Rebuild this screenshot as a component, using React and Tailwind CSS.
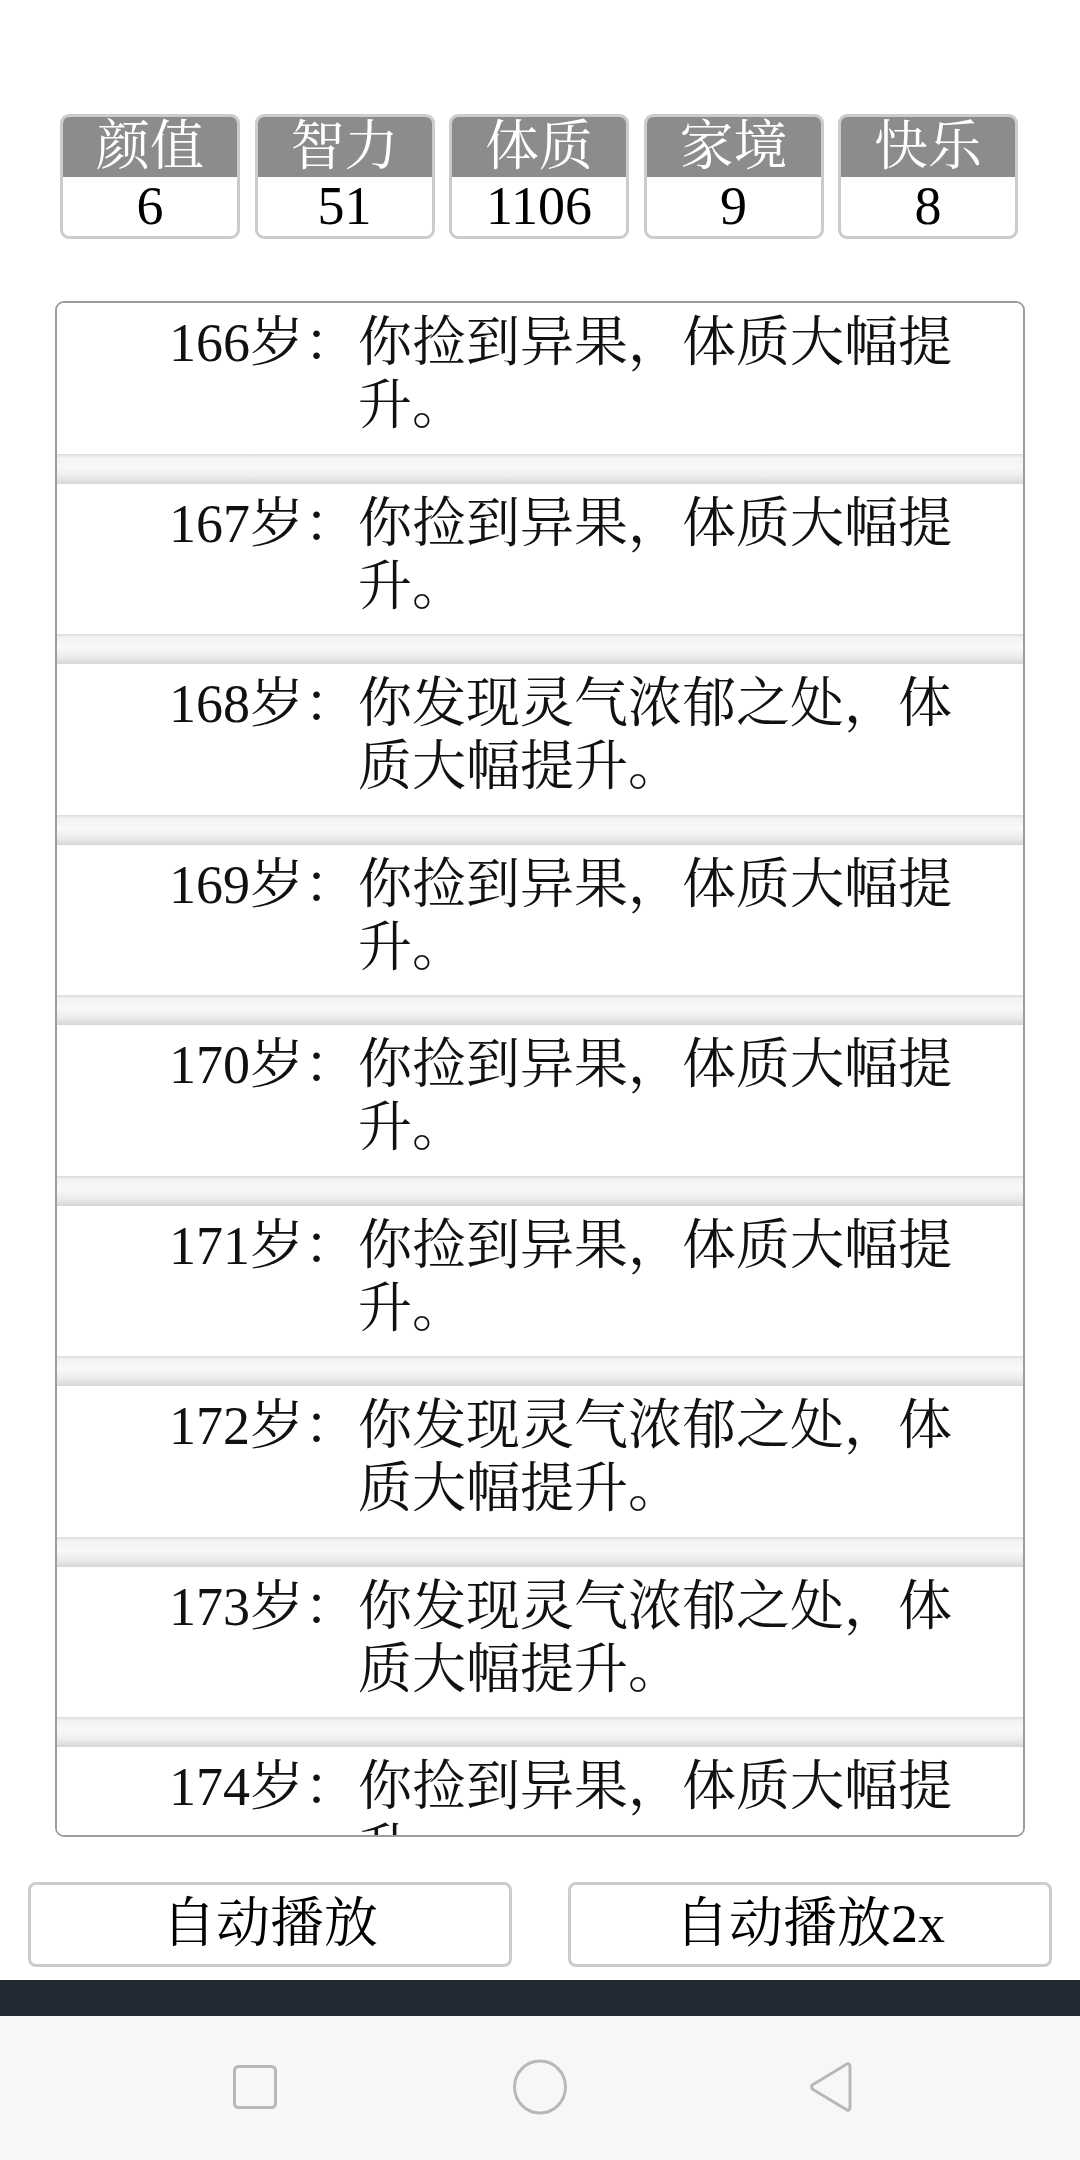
import React from "react";

const stats = [
  { name: "颜值", value: "6" },
  { name: "智力", value: "51" },
  { name: "体质", value: "1106" },
  { name: "家境", value: "9" },
  { name: "快乐", value: "8" },
];

const A = "你捡到异果，体质大幅提升。";
const B = "你发现灵气浓郁之处，体质大幅提升。";

const events = [
  [166, A],
  [167, A],
  [168, B],
  [169, A],
  [170, A],
  [171, A],
  [172, B],
  [173, B],
  [174, A],
];

function StatBox({ name, value }) {
  return (
    <div className="w-[180px] h-[125px] border-[3px] border-[#cccccc] rounded-[9px] overflow-hidden flex flex-col bg-white">
      <div className="h-[60px] bg-[#8c8c8c] text-white text-[54px] leading-[60px] text-center">{name}</div>
      <div className="flex-1 text-black text-[54px] leading-[58px] text-center">{value}</div>
    </div>
  );
}

function Item({ age, text, last }) {
  return (
    <>
      <div className="h-[150.5px] shrink-0 bg-white flex pt-[9px] pl-[111px] pr-[45px] text-[54px] leading-[63px] text-[#111]">
        <div className="w-[190px] shrink-0 text-right whitespace-nowrap">{age}岁：</div>
        <div className="flex-1">{text}</div>
      </div>
      {!last && (
        <div className="h-[30px] shrink-0 bg-[linear-gradient(to_bottom,#dcdcdc_0%,#f3f3f3_12%,#f8f8f8_45%,#ececec_75%,#d6d6d6_100%)]" />
      )}
    </>
  );
}

export default function App() {
  return (
    <div className="w-[1080px] h-[2160px] bg-white flex flex-col overflow-hidden font-['Liberation_Serif','Noto_Serif_CJK_SC','Noto_Sans_CJK_SC',serif]">
      <div className="h-[114px] shrink-0" />
      <div className="flex pl-[60px] gap-[14.5px] shrink-0">
        {stats.map((s) => (
          <StatBox key={s.name} {...s} />
        ))}
      </div>
      <div className="h-[62px] shrink-0" />
      <div className="ml-[55px] w-[970px] h-[1536px] shrink-0 border-2 border-[#9d9d9d] rounded-[9px] overflow-hidden flex flex-col bg-white">
        {events.map(([age, text], i) => (
          <Item key={age} age={age} text={text} last={i === events.length - 1} />
        ))}
      </div>
      <div className="h-[45px] shrink-0" />
      <div className="flex px-[28px] justify-between shrink-0">
        <button className="w-[484px] h-[85px] border-[3px] border-[#cccccc] rounded-[8px] bg-white text-[54px] leading-[79px] text-black text-center">
          自动播放
        </button>
        <button className="w-[484px] h-[85px] border-[3px] border-[#cccccc] rounded-[8px] bg-white text-[54px] leading-[79px] text-black text-center">
          自动播放2x
        </button>
      </div>
      <div className="h-[13px] shrink-0" />
      <div className="h-[36px] shrink-0 bg-[#232932]" />
      <div className="flex-1 bg-[#f7f7f7] flex items-center pb-[2px]">
        <div className="ml-[225px] w-[60px] h-[60px] flex items-center justify-center">
          <svg width="46" height="46" viewBox="0 0 46 46">
            <rect x="2.5" y="2.5" width="41" height="41" rx="4" fill="none" stroke="#b8b8b8" strokeWidth="3" />
          </svg>
        </div>
        <div className="ml-[225px] w-[60px] h-[60px] flex items-center justify-center">
          <svg width="56" height="56" viewBox="0 0 56 56">
            <ellipse cx="28" cy="28" rx="25.5" ry="26" fill="none" stroke="#b8b8b8" strokeWidth="3" />
          </svg>
        </div>
        <div className="ml-[230px] w-[60px] h-[60px] flex items-center justify-center">
          <svg width="48" height="54" viewBox="0 0 48 54">
            <path d="M41 4 Q44 3 44 7 L44 47 Q44 51 41 50 L7 29.5 Q4 27 7 24.5 Z" fill="none" stroke="#b8b8b8" strokeWidth="3" strokeLinejoin="round" />
          </svg>
        </div>
      </div>
    </div>
  );
}
